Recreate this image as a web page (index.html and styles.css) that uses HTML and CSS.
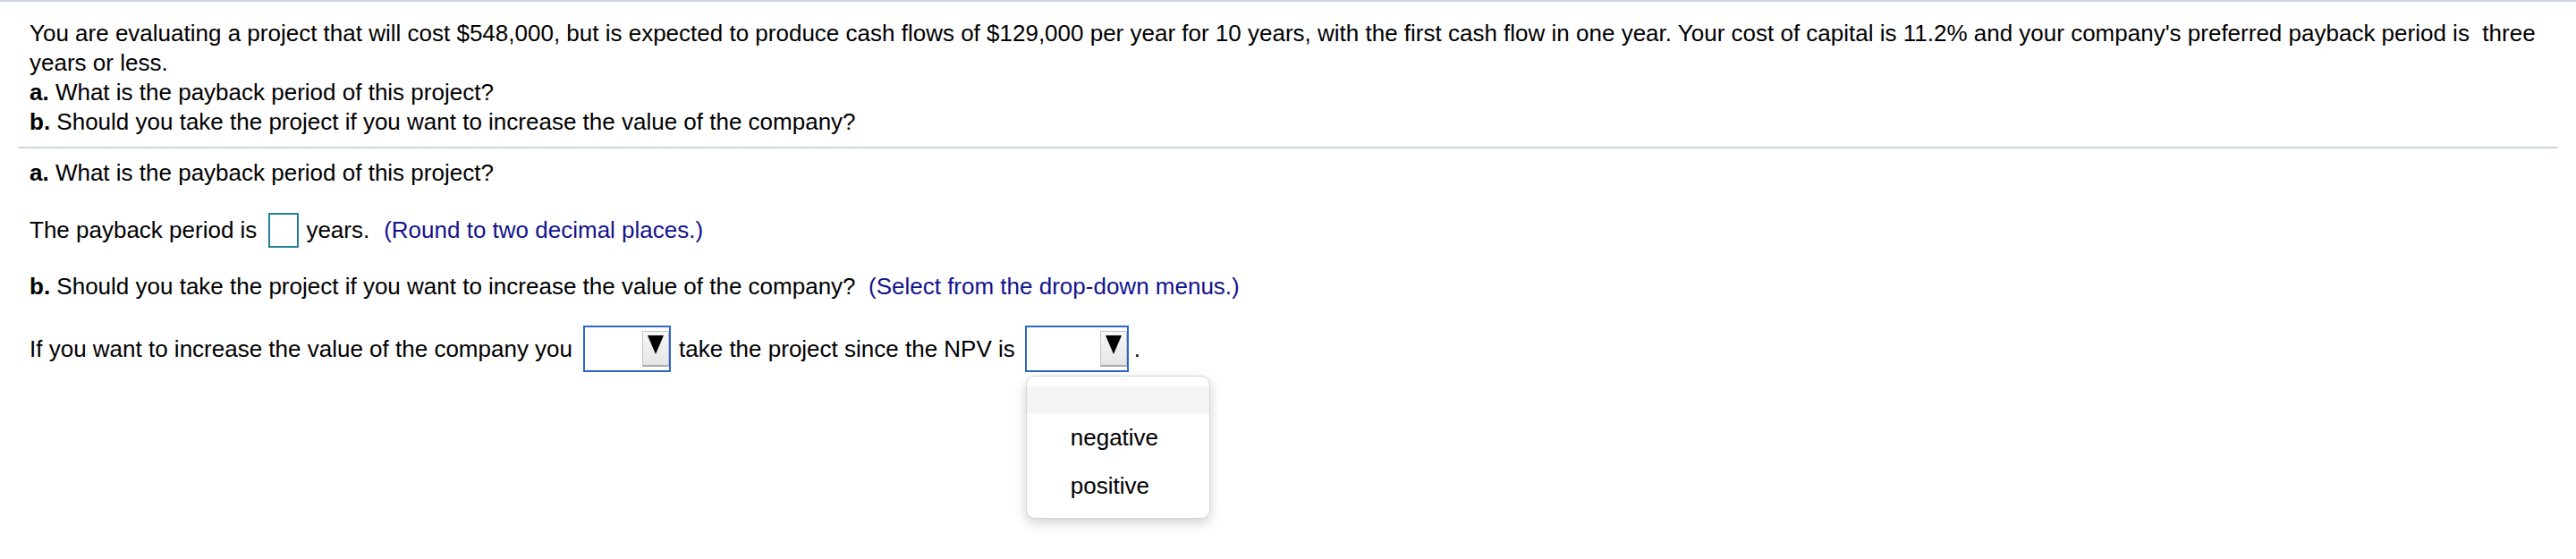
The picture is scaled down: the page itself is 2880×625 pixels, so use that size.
FILE: index.html
```html
<!DOCTYPE html>
<html>
<head>
<meta charset="utf-8">
<title>Payback period</title>
<link rel="stylesheet" href="styles.css">
</head>
<body>
<div class="page">
  <div class="question">
    <p>You are evaluating a project that will cost $548,000, but is expected to produce cash flows of $129,000 per year for 10 years, with the first cash flow in one year. Your cost of capital is 11.2% and your company's preferred payback period is&nbsp; three years or less.</p>
    <p><b>a.</b> What is the payback period of this project?</p>
    <p><b>b.</b> Should you take the project if you want to increase the value of the company?</p>
  </div>
  <div class="sep"></div>
  <div class="answer">
    <p class="line part-a"><b>a.</b> What is the payback period of this project?</p>
    <div class="row payback">
      <span>The payback period is</span>
      <span class="input"></span>
      <span class="unit">years.</span>
      <span class="hint hint-round">(Round to two decimal places.)</span>
    </div>
    <p class="line part-b"><b>b.</b> Should you take the project if you want to increase the value of the company?&nbsp; <span class="hint">(Select from the drop-down menus.)</span></p>
    <div class="row choice">
      <span>If you want to increase the value of the company you</span>
      <div class="select-wrap s1">
        <div class="select"><div class="btn"><svg class="tri" viewBox="0 0 18 21"><polygon points="0,0 18,0 9,21" fill="#000"/></svg></div></div>
      </div>
      <span class="mid">take the project since the NPV is</span>
      <div class="select-wrap s2">
        <div class="select"><div class="btn"><svg class="tri" viewBox="0 0 18 21"><polygon points="0,0 18,0 9,21" fill="#000"/></svg></div></div>
        <div class="menu">
          <div class="opt empty"></div>
          <div class="opt">negative</div>
          <div class="opt">positive</div>
        </div>
      </div>
      <span class="dot">.</span>
    </div>
  </div>
</div>
</body>
</html>
```

FILE: styles.css
```css
html, body {
  margin: 0;
  padding: 0;
  background: #fff;
}

body {
  font-family: "Liberation Sans", Arial, Helvetica, sans-serif;
  font-size: 26px;
  line-height: 33px;
  color: #000;
}

.page {
  box-sizing: border-box;
  min-height: 625px;
  border-top: 2px solid #cdd2e1;
}

.question {
  padding: 19px 20px 0 33px;
}

.question p {
  margin: 0;
}

.sep {
  height: 2px;
  margin: 11px 20px 0 20px;
  background: #cfd4e1;
}

.answer {
  padding-left: 33px;
}

.line {
  margin: 0;
}

.part-a {
  margin-top: 11px;
}

.part-b {
  margin-top: 27px;
}

.row {
  display: flex;
  align-items: center;
}

.payback {
  margin-top: 28px;
  height: 39px;
}

.input {
  box-sizing: border-box;
  width: 34px;
  height: 39px;
  border: 2px solid #23809a;
  margin-left: 13px;
  background: #fff;
}

.unit {
  margin-left: 8px;
}

.hint {
  color: #12128c;
}

.hint-round {
  margin-left: 16px;
}

.choice {
  margin-top: 27px;
  height: 52px;
}

.select-wrap {
  position: relative;
  height: 52px;
}

.select {
  box-sizing: border-box;
  width: 100%;
  height: 52px;
  border: 2px solid #2d66c9;
  background: #fff;
  display: flex;
  justify-content: flex-end;
  align-items: flex-start;
  padding-top: 4px;
}

.s1 {
  width: 98px;
  margin-left: 12px;
}

.s2 {
  width: 116px;
  margin-left: 11px;
}

.mid {
  margin-left: 9px;
}

.dot {
  margin-left: 6px;
}

.btn {
  box-sizing: border-box;
  width: 30px;
  height: 40px;
  background: linear-gradient(#f7f7f7, #e6e6e6);
  border: 1px solid #c4c4c4;
  border-bottom: 2px solid #a9a9a9;
  display: flex;
  justify-content: center;
  align-items: flex-start;
  padding-top: 4px;
}

.tri {
  width: 18px;
  height: 21px;
  display: block;
}

.menu {
  position: absolute;
  z-index: 10;
  top: 56px;
  left: 1px;
  box-sizing: border-box;
  width: 206px;
  height: 160px;
  padding: 11px 0 10px 0;
  background: #fff;
  border: 1px solid #d6d6d6;
  border-radius: 10px;
  box-shadow: 0 5px 14px rgba(0, 0, 0, 0.18);
}

.opt {
  height: 54px;
  line-height: 54px;
  padding-left: 49px;
  white-space: nowrap;
}

.opt.empty {
  height: 30px;
  background: #f4f4f4;
}
```
